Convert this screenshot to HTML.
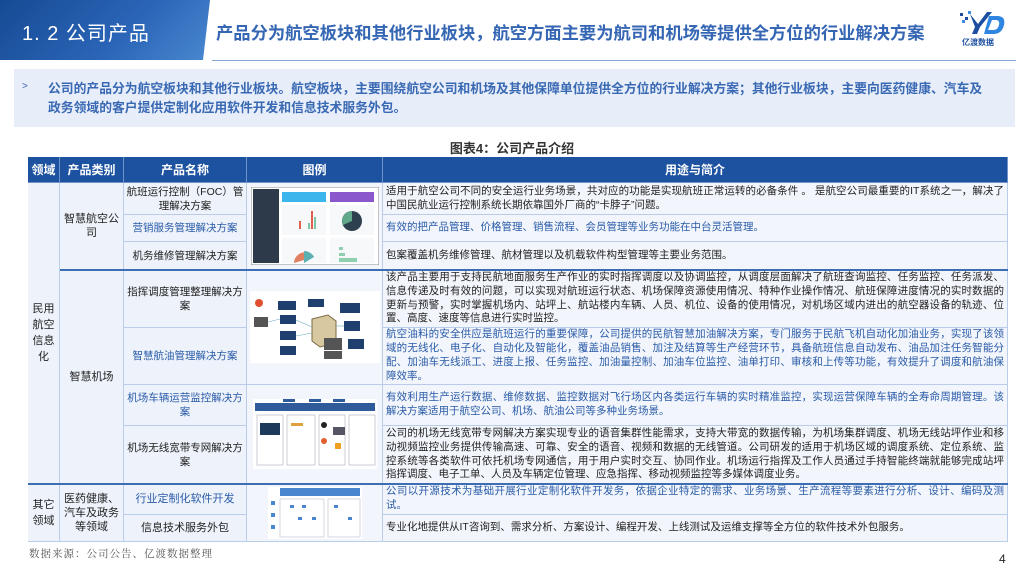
<!DOCTYPE html>
<html><head><meta charset="utf-8"><style>
*{margin:0;padding:0;box-sizing:border-box}
body{width:1024px;height:576px;background:#fff;position:relative;overflow:hidden;font-family:"Liberation Sans","Noto Sans CJK SC",sans-serif;color:#222}
.abs{position:absolute}
.c{position:absolute;display:flex;align-items:center;justify-content:center;text-align:center;background:#eef3fb;border-right:1px solid #b9cdea;border-bottom:1px solid #b9cdea;font-size:10.5px;line-height:14px;padding:0 2px}
.d{justify-content:flex-start;text-align:justify;font-size:10.5px;line-height:13.8px;padding:0 3px;background:#f2f6fc}
.h{background:#1c52a0;color:#fff;font-weight:bold;font-size:12px;border-color:#6f93c9}
.b{color:#2a5ba8}
.tk{position:absolute;height:2px;background:#3d6db3}
</style></head><body>
<div class="abs" style="left:0;top:0;width:210px;height:60px;background:linear-gradient(135deg,#164a94,#2c66b8 60%,#4a88d0);clip-path:polygon(0 0,210px 0,203px 60px,0 60px)"></div>
<div class="abs" style="left:22px;top:17px;color:#fff;font-size:20px;letter-spacing:1px">1. 2 公司产品</div>
<div class="abs" style="left:216px;top:19px;color:#3566b4;font-size:17.3px;font-weight:bold;white-space:nowrap">产品分为航空板块和其他行业板块，航空方面主要为航司和机场等提供全方位的行业解决方案</div>
<div class="abs" style="left:212px;top:60px;width:804px;height:1px;background:#8aa8d4"></div>
<svg class="abs" style="left:956px;top:8px" width="60" height="40" viewBox="0 0 60 40">
<rect x="4" y="5" width="3" height="3" fill="#1d4fa0"/><rect x="9" y="9" width="3" height="3" fill="#1d4fa0"/><rect x="6" y="12" width="3" height="3" fill="#3a8de0"/><rect x="12" y="3" width="3" height="3" fill="#3a8de0"/>
<path d="M14 6 L22 16 L31 4 L36 4 L24 19 L21 26 L16 26 L19 19 Z" fill="#1d4fa0"/>
<path d="M33 8 L41 8 Q50 8 48 17 Q46 26 37 26 L28 26 Z M36 12 L32 22 L37 22 Q42 22 43 17 Q44 12 40 12 Z" fill="#2f86e0"/>
<text x="6" y="37" font-size="8" fill="#1d4fa0" font-weight="bold" font-family="Noto Sans CJK SC,sans-serif">亿渡数据</text>
</svg>
<div class="abs" style="left:14px;top:69px;width:1001px;height:58px;background:#e7eef9"></div>
<div class="abs" style="left:22px;top:81px;font-size:10px;color:#3a69b4">&gt;</div>
<div class="abs" style="left:48px;top:79px;width:942px;font-size:12.8px;font-weight:bold;color:#3a69b4;line-height:19px">公司的产品分为航空板块和其他行业板块。航空板块，主要围绕航空公司和机场及其他保障单位提供全方位的行业解决方案；其他行业板块，主要向医药健康、汽车及政务领域的客户提供定制化应用软件开发和信息技术服务外包。</div>
<div class="abs" style="left:0;width:1024px;top:138px;text-align:center;font-size:13px;font-weight:bold;color:#333">图表4：公司产品介绍</div>

<div style="position:absolute;left:28px;top:157px;width:980px;height:385px;border-left:1px solid #b9cdea"></div>
<div class="c h" style="left:28px;top:157px;width:32px;height:26px">领域</div>
<div class="c h" style="left:60px;top:157px;width:64px;height:26px">产品类别</div>
<div class="c h" style="left:124px;top:157px;width:123px;height:26px">产品名称</div>
<div class="c h" style="left:247px;top:157px;width:136px;height:26px">图例</div>
<div class="c h" style="left:383px;top:157px;width:625px;height:26px">用途与简介</div>

<div class="c" style="left:28px;top:183px;width:32px;height:301px;font-size:11px;line-height:16px">民用<br>航空<br>信息<br>化</div>
<div class="c" style="left:60px;top:183px;width:64px;height:87px;font-size:11px">智慧航空公司</div>
<div class="c" style="left:124px;top:183px;width:123px;height:32px">航班运行控制（FOC）管理解决方案</div>
<div class="c b" style="left:124px;top:215px;width:123px;height:27px">营销服务管理解决方案</div>
<div class="c" style="left:124px;top:242px;width:123px;height:28px">机务维修管理解决方案</div>
<div class="c" style="left:247px;top:183px;width:136px;height:87px;background:#f2f6fc"><svg width="128" height="78" viewBox="0 0 128 78">
<rect x="0" y="0" width="128" height="78" fill="#fff" stroke="#888"/><rect x="2" y="2" width="26" height="74" fill="#2c3a4a"/>
<rect x="31" y="5" width="44" height="10" fill="#3cb4ec"/><rect x="79" y="5" width="44" height="10" fill="#8a58cc"/>
<rect x="31" y="18" width="44" height="30" fill="#f7f8fa"/><rect x="79" y="18" width="44" height="30" fill="#f7f8fa"/>
<rect x="48" y="34" width="2" height="8" fill="#e06050"/><rect x="60" y="24" width="2" height="18" fill="#e06050"/><rect x="57" y="36" width="2" height="6" fill="#7cc4a8"/><rect x="63" y="30" width="2" height="12" fill="#7cc4a8"/>
<circle cx="101" cy="34" r="10" fill="#2d4050"/><path d="M101 34 L101 24 A10 10 0 0 0 92 38 Z" fill="#5fa88a"/>
<rect x="31" y="51" width="44" height="25" fill="#f7f8fa"/><rect x="79" y="51" width="44" height="25" fill="#f7f8fa"/>
<path d="M43 76 A11 11 0 0 1 63 70 Z" fill="#e08060"/><path d="M53 76 L53 64 A11 11 0 0 1 63 70Z" fill="#5ab0b0"/>
<rect x="88" y="60" width="4" height="3" fill="#8fcfb0"/><rect x="88" y="66" width="6" height="3" fill="#8fcfb0"/><rect x="88" y="71" width="18" height="4" fill="#8fcfb0"/>
</svg></div>
<div class="c d" style="left:383px;top:183px;width:625px;height:32px">适用于航空公司不同的安全运行业务场景，共对应的功能是实现航班正常运转的必备条件 。 是航空公司最重要的IT系统之一，解决了中国民航业运行控制系统长期依靠国外厂商的“卡脖子”问题。</div>
<div class="c d b" style="left:383px;top:215px;width:625px;height:27px">有效的把产品管理、价格管理、销售流程、会员管理等业务功能在中台灵活管理。</div>
<div class="c d" style="left:383px;top:242px;width:625px;height:28px">包案覆盖机务维修管理、航材管理以及机载软件构型管理等主要业务范围。</div>

<div class="c" style="left:60px;top:270px;width:64px;height:214px;font-size:11px">智慧机场</div>
<div class="c" style="left:124px;top:270px;width:123px;height:58px">指挥调度管理整理解决方案</div>
<div class="c b" style="left:124px;top:328px;width:123px;height:57px">智慧航油管理解决方案</div>
<div class="c b" style="left:124px;top:385px;width:123px;height:41px">机场车辆运营监控解决方案</div>
<div class="c" style="left:124px;top:426px;width:123px;height:58px">机场无线宽带专网解决方案</div>
<div class="c" style="left:247px;top:270px;width:136px;height:115px;background:#f2f6fc"><svg width="130" height="72" viewBox="0 0 130 72">
<rect width="130" height="72" fill="#fff"/>
<g fill="#1f3f6e"><rect x="28" y="10" width="18" height="9"/><rect x="30" y="24" width="16" height="9"/><rect x="30" y="40" width="16" height="9"/><rect x="30" y="55" width="16" height="9"/><rect x="90" y="12" width="20" height="10"/><rect x="94" y="30" width="16" height="10"/><rect x="98" y="48" width="16" height="10"/><rect x="58" y="8" width="16" height="8"/></g>
<path d="M62 28 L78 24 L86 30 L86 52 L70 56 L62 50 Z" fill="#d8c8a0" stroke="#7a6a40"/>
<g fill="#555"><rect x="4" y="26" width="14" height="10"/><rect x="74" y="47" width="18" height="12"/><rect x="74" y="60" width="18" height="8"/></g>
<g stroke="#6ab" stroke-width="0.6"><line x1="46" y1="29" x2="62" y2="36"/><line x1="46" y1="45" x2="62" y2="42"/><line x1="86" y1="35" x2="94" y2="35"/><line x1="18" y1="31" x2="30" y2="28"/></g>
<circle cx="9" cy="12" r="4" fill="#e05030"/></svg></div>
<div class="c" style="left:247px;top:385px;width:136px;height:99px;background:#f2f6fc"><svg width="124" height="70" viewBox="0 0 124 70">
<rect width="124" height="70" fill="#fff"/><rect x="2" y="4" width="120" height="8" fill="#2f5b9a"/>
<g fill="#2f5b9a"><rect x="30" y="0" width="12" height="3"/><rect x="56" y="0" width="12" height="3"/><rect x="80" y="0" width="12" height="3"/></g>
<g fill="none" stroke="#aab" stroke-width="0.6"><rect x="4" y="16" width="26" height="50"/><rect x="34" y="16" width="28" height="50"/><rect x="66" y="16" width="26" height="50"/><rect x="96" y="16" width="26" height="50"/></g>
<rect x="7" y="24" width="20" height="12" fill="#1e3a5a"/><rect x="80" y="28" width="12" height="8" fill="#556"/>
<circle cx="71" cy="26" r="3" fill="#222"/><circle cx="71" cy="42" r="3" fill="#e06030"/><rect x="82" y="44" width="6" height="6" fill="#f0a020"/>
<rect x="38" y="24" width="12" height="3" fill="#e0a040"/></svg></div>
<div class="c d" style="left:383px;top:270px;width:625px;height:58px">该产品主要用于支持民航地面服务生产作业的实时指挥调度以及协调监控，从调度层面解决了航班查询监控、任务监控、任务派发、信息传递及时有效的问题，可以实现对航班运行状态、机场保障资源使用情况、特种作业操作情况、航班保障进度情况的实时数据的更新与预警，实时掌握机场内、站坪上、航站楼内车辆、人员、机位、设备的使用情况，对机场区域内进出的航空器设备的轨迹、位置、高度、速度等信息进行实时监控。</div>
<div class="c d b" style="left:383px;top:328px;width:625px;height:57px">航空油料的安全供应是航班运行的重要保障，公司提供的民航智慧加油解决方案，专门服务于民航飞机自动化加油业务，实现了该领域的无线化、电子化、自动化及智能化，覆盖油品销售、加注及结算等生产经营环节，具备航班信息自动发布、油品加注任务智能分配、加油车无线派工、进度上报、任务监控、加油量控制、加油车位监控、油单打印、审核和上传等功能，有效提升了调度和航油保障效率。</div>
<div class="c d b" style="left:383px;top:385px;width:625px;height:41px">有效利用生产运行数据、维修数据、监控数据对飞行场区内各类运行车辆的实时精准监控，实现运营保障车辆的全寿命周期管理。该解决方案适用于航空公司、机场、航油公司等多种业务场景。</div>
<div class="c d" style="left:383px;top:426px;width:625px;height:58px">公司的机场无线宽带专网解决方案实现专业的语音集群性能需求，支持大带宽的数据传输，为机场集群调度、机场无线站坪作业和移动视频监控业务提供传输高速、可靠、安全的语音、视频和数据的无线管道。公司研发的适用于机场区域的调度系统、定位系统、监控系统等各类软件可依托机场专网通信，用于用户实时交互、协同作业。机场运行指挥及工作人员通过手持智能终端就能够完成站坪指挥调度、电子工单、人员及车辆定位管理、应急指挥、移动视频监控等多媒体调度业务。</div>

<div class="c" style="left:28px;top:484px;width:32px;height:58px;font-size:11px;line-height:16px">其它<br>领域</div>
<div class="c" style="left:60px;top:484px;width:64px;height:58px;font-size:11px">医药健康、汽车及政务等领域</div>
<div class="c b" style="left:124px;top:484px;width:123px;height:31px;font-size:11px">行业定制化软件开发</div>
<div class="c" style="left:124px;top:515px;width:123px;height:27px;font-size:11px">信息技术服务外包</div>
<div class="c" style="left:247px;top:484px;width:136px;height:58px;background:#f2f6fc"><svg width="94" height="52" viewBox="0 0 94 52">
<rect width="94" height="52" fill="#fff"/><rect x="12" y="1" width="80" height="8" fill="#4a86d0"/>
<g fill="none" stroke="#bbc" stroke-width="0.6"><rect x="12" y="12" width="44" height="38"/><rect x="60" y="12" width="32" height="38"/></g>
<g fill="#4a86d0"><rect x="3" y="14" width="4" height="4"/><rect x="3" y="26" width="4" height="4"/><rect x="3" y="38" width="4" height="4"/><rect x="22" y="18" width="4" height="3"/><rect x="34" y="18" width="4" height="3"/><rect x="30" y="30" width="4" height="3"/><rect x="44" y="30" width="4" height="3"/><rect x="66" y="18" width="4" height="3"/><rect x="80" y="30" width="4" height="3"/></g></svg></div>
<div class="c d b" style="left:383px;top:484px;width:625px;height:31px">公司以开源技术为基础开展行业定制化软件开发务，依据企业特定的需求、业务场景、生产流程等要素进行分析、设计、编码及测试。</div>
<div class="c d" style="left:383px;top:515px;width:625px;height:27px">专业化地提供从IT咨询到、需求分析、方案设计、编程开发、上线测试及运维支撑等全方位的软件技术外包服务。</div>

<div class="tk" style="left:60px;top:269px;width:948px"></div>
<div class="tk" style="left:28px;top:483px;width:980px"></div>

<div class="abs" style="left:29px;top:546px;font-size:10.5px;color:#555;letter-spacing:1px;font-family:'Noto Serif CJK SC',serif">数据来源：公司公告、亿渡数据整理</div>
<div class="abs" style="left:999px;top:552px;font-size:12px;color:#222">4</div>
</body></html>
